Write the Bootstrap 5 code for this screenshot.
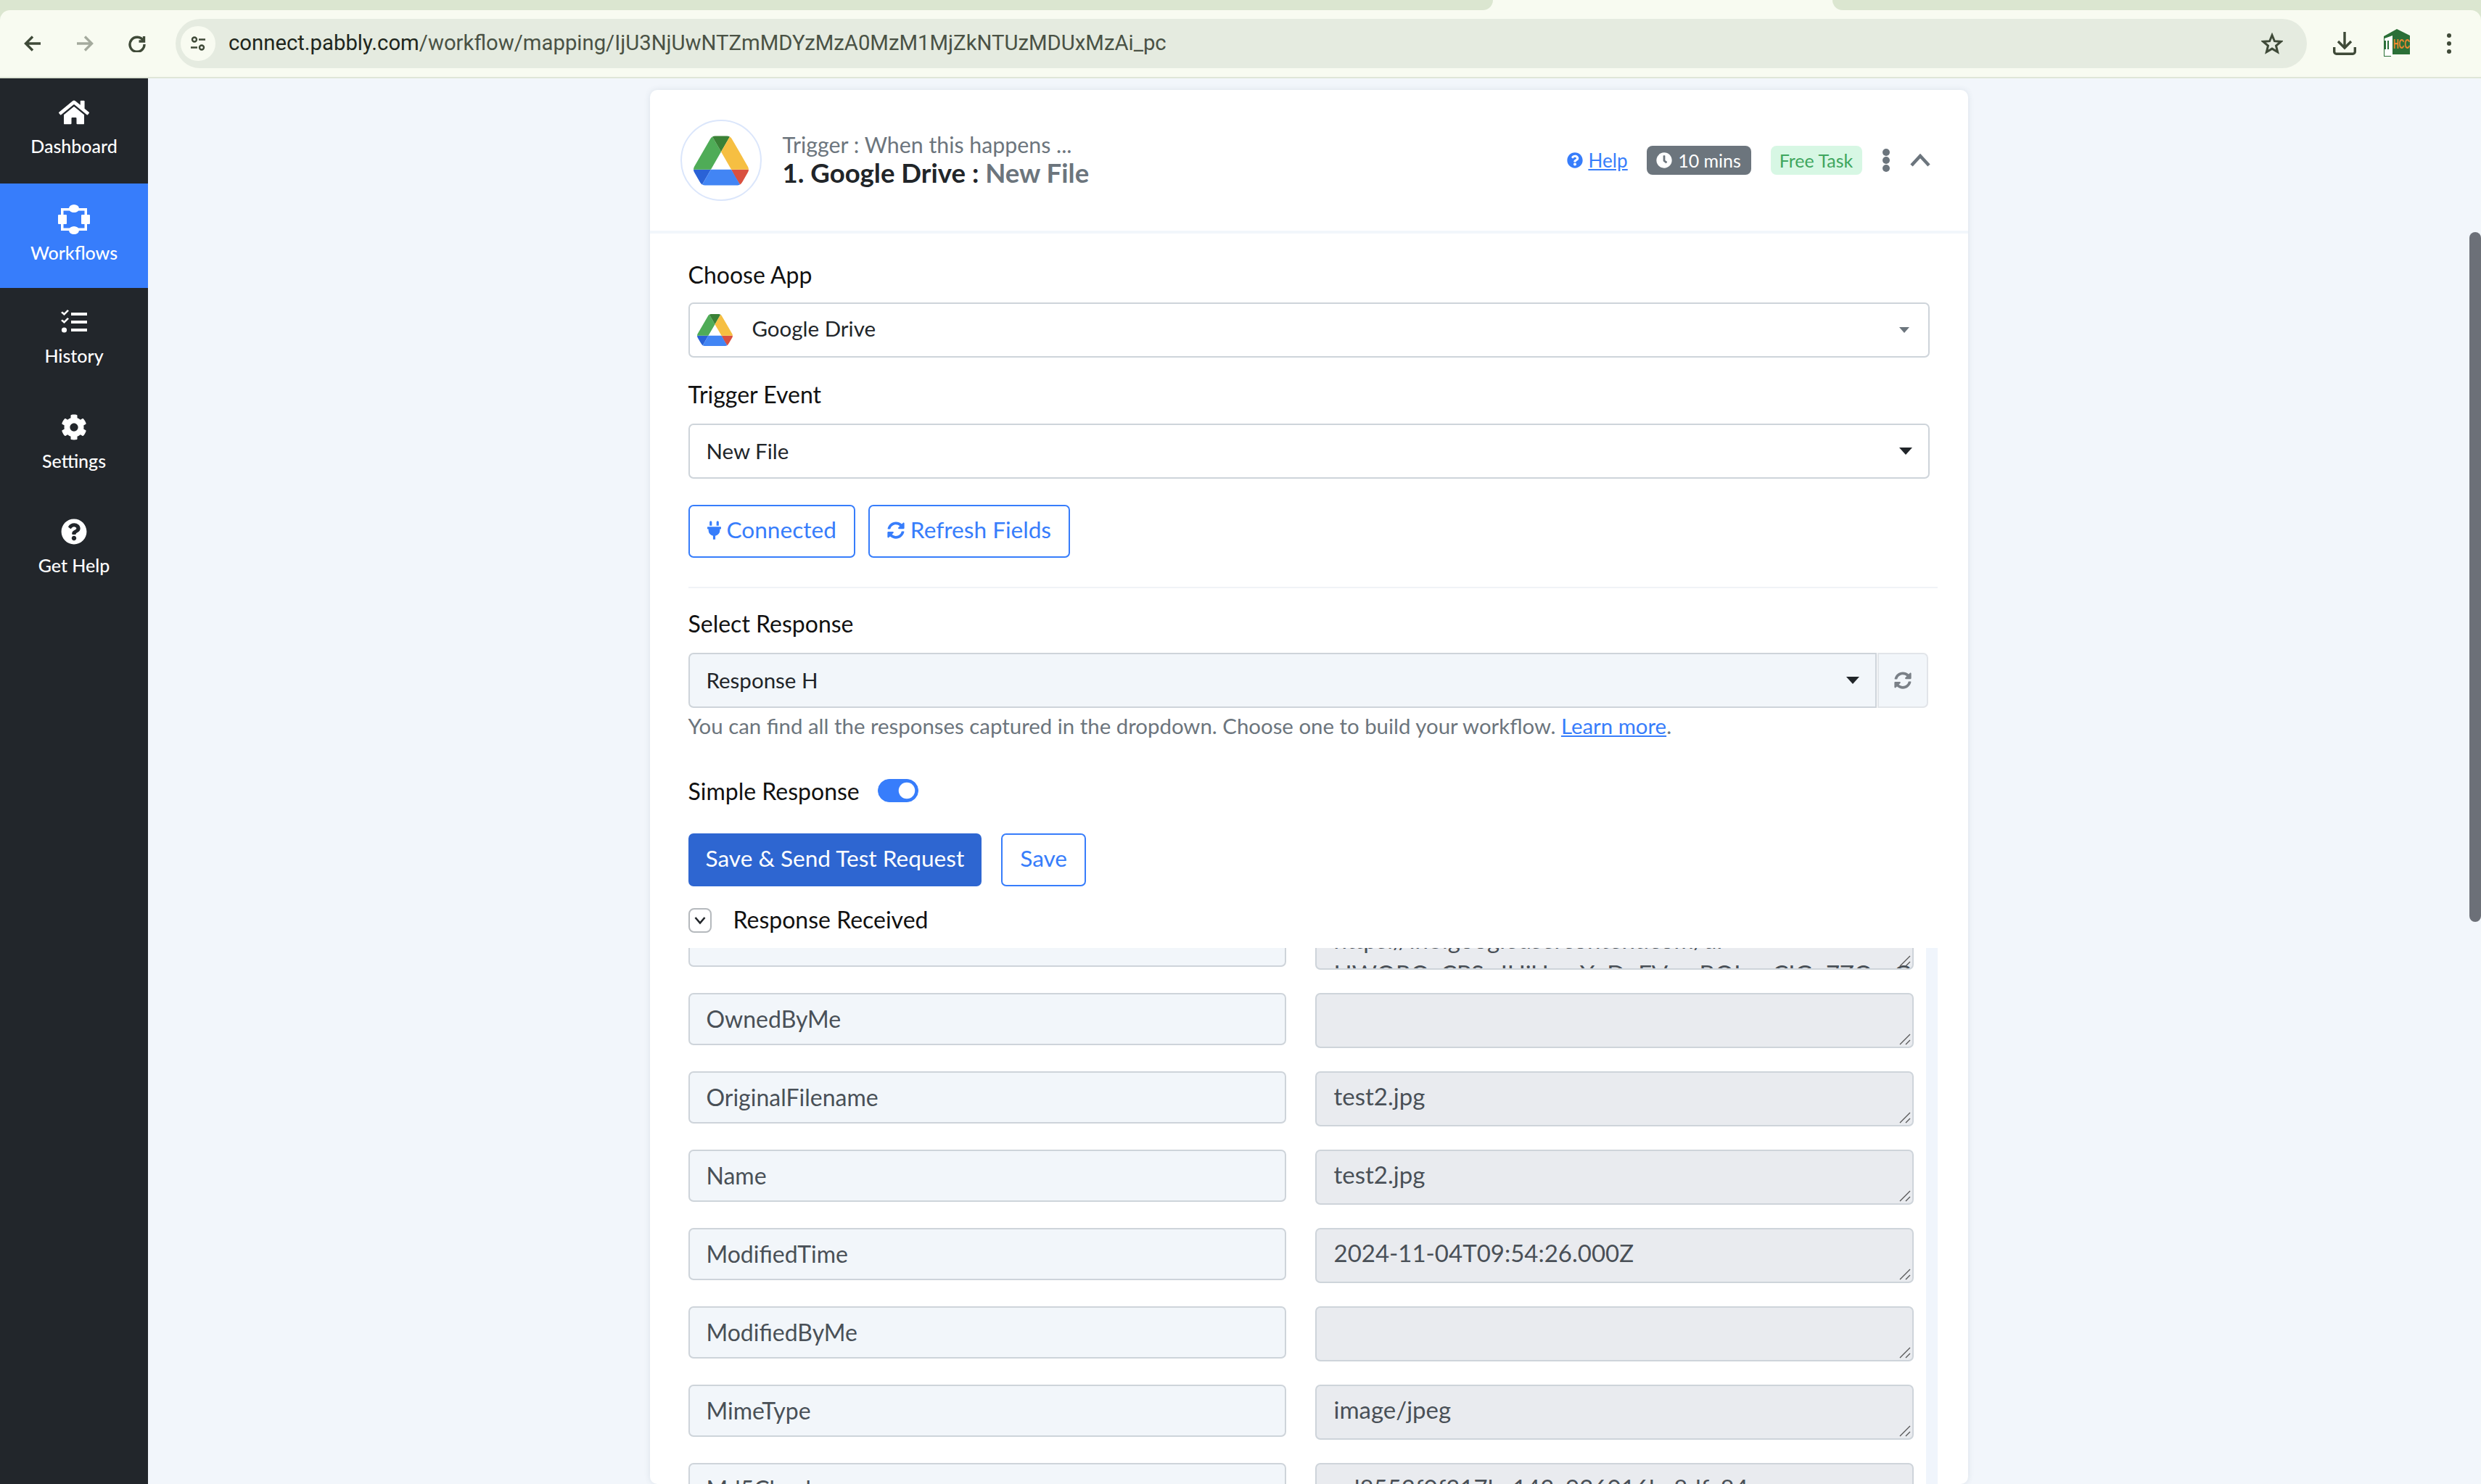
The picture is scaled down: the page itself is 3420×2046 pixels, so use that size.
<!DOCTYPE html>
<html lang="en">
<head>
  <meta charset="UTF-8">
  <meta name="viewport" content="width=device-width, initial-scale=1.0">
  <title>Pabbly Connect - Workflow mapping</title>
  <link rel="stylesheet" href="https://cdn.jsdelivr.net/npm/bootstrap@5.3.0/dist/css/bootstrap.min.css">
  <style>
    html, body { height: 100%; overflow: hidden; }
    body { background: #f2f6fb; font-family: Lato, "Liberation Sans", sans-serif; color: #212529; }

    /* browser chrome */
    .chrome-frame { background: #dbe6d0; flex: none; }
    .tab-strip { height: 14px; background: #f8fbf1; }
    .tab-left { width: 2058px; background: #dbe6d0; border-bottom-right-radius: 22px; }
    .tab-right { flex: 1; margin-left: 468px; background: #dbe6d0; border-bottom-left-radius: 22px; }
    .tool-bar { height: 94px; background: #f8fbf1; border-bottom: 2px solid #dfe6d8; border-radius: 14px 14px 0 0; padding: 0 0 0 33px; }
    .tool-btn { fill: none; stroke: #3f4a38; stroke-width: 3.4; }
    .tool-gap { margin-left: 48px; }
    .tool-dim { opacity: .45; }
    .tool-dl { margin-left: 36px; }
    .tool-avatar { margin-left: 36px; }
    .tool-dots { margin-left: 46px; }
    .url-pill { width: 2938px; height: 68px; margin-left: 41px; border-radius: 34px; background: #e5ebe0; padding: 0 33px 0 7px; }
    .site-dot { width: 48px; height: 48px; border-radius: 50%; background: #f8fbf1; }
    .url-text { margin-left: 18px; font-family: Roboto, sans-serif; font-size: 29.3px; color: #4a5245; }
    .url-text b { font-weight: 400; color: #20261c; }

    /* sidebar */
    .side-nav { width: 204px; background: #22262b; flex: none; }
    .side-link { height: 144.5px; padding-top: 28px; color: #fff; font-size: 25px; font-weight: 500; text-decoration: none; }
    .side-link:hover { color: #fff; }
    .side-link.is-on { background: #377dfb; padding-top: 29px; }
    .side-ico { height: 38px; margin-bottom: 9px; fill: #fff; }
    .is-on .side-ico { height: 41px; margin-bottom: 7px; }

    /* card */
    .work-area { min-width: 0; }
    .flow-card { width: 1817px; margin-top: 16px; border: 0; border-radius: 10px; box-shadow: 0 0 8px rgba(60, 80, 110, .12); }
    .flow-head { height: 198px; border-bottom: 4px solid #f2f6fb; padding: 0 52px 0 42px; }
    .app-ring { width: 112px; height: 112px; border: 2px solid #dbe6fb; border-radius: 50%; margin-right: 29px; }
    .head-text { margin-top: -3px; }
    .head-sub { font-size: 30.3px; line-height: 38px; color: #6c757d; }
    .head-title { font-size: 36.6px; line-height: 44px; margin-top: -2px; font-weight: 700; color: #212529; }
    .head-title span { color: #6c757d; }
    .help-link { font-size: 26px; color: #377dfb; margin-right: 26px; }
    .time-pill, .free-pill { height: 40px; font-size: 25px; font-weight: 400; border-radius: 8px; padding: 0 10px; }
    .time-pill { width: 144px; background: #6c757d; color: #fff; margin-right: 27px; }
    .free-pill { width: 126px; background: #d7f7e4; color: #3fa65e; margin-right: 27px; }
    .chev-up { margin-left: 27px; }
    .flow-body { padding: 0 53px; }
    .fld-label { display: block; font-size: 32px; line-height: 37px; padding-bottom: 3px; color: #111; margin: 0; }
    .top-38 { margin-top: 38px; }
    .top-32 { margin-top: 32px; }
    .pick-box, .pick-native { height: 76px; border: 2px solid #ced4da; border-radius: 7px; font-size: 29.5px; color: #212529; background-color: #fff; }
    .pick-box { margin-top: 17px; padding: 0 26px 0 10px; }
    .pick-box span { margin-left: 27px; padding-bottom: 3px; }
    .caret-mini { width: 0; height: 0; border: 7px solid transparent; border-top: 8px solid #6c757d; border-bottom: 0; margin-left: auto; }
    .pick-native { padding: 0 23px; background-image: url("data:image/svg+xml,%3csvg xmlns='http://www.w3.org/2000/svg' viewBox='0 0 18 10'%3e%3cpath fill='%23212529' d='M0 0h18L9 10z'/%3e%3c/svg%3e"); background-size: 18px 10px; background-position: right 22px center; }
    .mt-event { margin-top: 19px; }
    .line-btns { margin-top: 36px; gap: 18px; }
    .btn-line, .btn-solid { height: 73px; font-size: 31.6px; border-radius: 7px; padding: 0 24px 3px; display: inline-flex; align-items: center; }
    .btn-line { border: 2px solid #377dfb; color: #377dfb; background: #fff; }
    .btn-line:hover { color: #377dfb; background: #fff; border-color: #377dfb; }
    .btn-solid { border: 0; background: #2e66d1; color: #fff; }
    .btn-solid:hover { background: #2e66d1; color: #fff; }
    .btn-line svg { fill: #377dfb; margin-right: 8px; }
    .thin-rule { height: 2px; margin: 40px -11px 0 0; background: #f0f3f7; }
    .top-30 { margin-top: 30px; }
    .resp-group { margin-top: 19px; width: 1709px; }
    .resp-group .pick-native { flex: none; width: 1638px; background-color: #f2f6fa; border-radius: 7px 0 0 7px; }
    .resync-btn { width: 70px; height: 76px; background: #f2f6fa; border: 2px solid #e2e5e9; border-radius: 0 7px 7px 0 !important; margin-left: 1px !important; }
    .resync-btn svg { fill: #7a8087; }
    .hint-line { font-size: 29.4px; line-height: 40px; color: #6c757d; margin: 5px 0 0; }
    .hint-line a { color: #377dfb; }
    .simple-row { margin-top: 51px; height: 40px; }
    .form-switch .switch-big { width: 56px; height: 32px; margin: 0 0 4px 25px; background-color: #377dfb; border-color: #377dfb; }
    .action-row { margin-top: 37px; gap: 27px; }
    .recv-row { margin-top: 27px; height: 40px; }
    .recv-tick { width: 32px; height: 34px; border: 2px solid #b5b9bd; border-radius: 8px; margin-right: 30px; }

    /* response field rows */
    .resp-frame { margin: 18px -11px 0 0; height: 739px; overflow: hidden; }
    .resp-rows { margin-top: -46px; margin-right: 17px; }
    .resp-row { gap: 40px; margin-bottom: 32px; }
    .resp-row > * { flex: 1 1 0; min-width: 0; }
    .fld-key, .fld-val { line-height: 44px; color: #495057; border: 2px solid #ced4da; border-radius: 7px; padding: 10px 24px 12px; box-shadow: none; }
    .fld-key { height: 72px; font-size: 32px; padding-left: 23px; background: #f2f6fa; }
    .fld-val { height: 76px; min-height: 76px; font-size: 33px; overflow: hidden; white-space: pre; resize: none; background: #e9ebef url("data:image/svg+xml,%3csvg xmlns='http://www.w3.org/2000/svg' width='16' height='16'%3e%3cpath d='M1 15 15 1M9 15l6-6' stroke='%23555' stroke-width='1.300' fill='none'/%3e%3c/svg%3e") no-repeat right 2px bottom 2px; }
    .fld-key:focus { background: #f2f6fa; }
    .fld-val:focus { background-color: #e9ebef; }
    .fld-clip { padding-top: 9px; line-height: 47px; }
    .inner-track { width: 16px; flex: none; background: #f0f5fc; }

    /* page scrollbar */
    .page-track { width: 16px; flex: none; }
    .page-thumb { height: 951px; margin-top: 212px; border-radius: 8px; background: #6c7078; }
  </style>
</head>
<body class="d-flex flex-column">

<svg width="0" height="0" class="d-none">
  <symbol id="drive-logo" viewBox="0 0 87.3 78">
    <path d="m6.6 66.85 3.85 6.65c.8 1.4 1.95 2.5 3.3 3.3l13.75-23.8h-27.5c0 1.55.4 3.1 1.2 4.5z" fill="#2a62d6"/>
    <path d="m43.65 25-13.75-23.8c-1.35.8-2.5 1.9-3.3 3.3l-25.4 44a9.06 9.06 0 0 0 -1.2 4.5h27.5z" fill="#4fac57"/>
    <path d="m73.55 76.8c1.35-.8 2.5-1.9 3.3-3.3l1.6-2.75 7.65-13.25c.8-1.4 1.2-2.95 1.2-4.5h-27.502l5.852 11.5z" fill="#d95040"/>
    <path d="m43.65 25 13.75-23.8c-1.35-.8-2.9-1.2-4.5-1.2h-18.5c-1.6 0-3.15.45-4.5 1.2z" fill="#3a8136"/>
    <path d="m59.8 53h-32.3l-13.75 23.8c1.35.8 2.9 1.2 4.5 1.2h50.8c1.6 0 3.15-.45 4.5-1.2z" fill="#4285f4"/>
    <path d="m73.4 26.5-12.7-22c-.8-1.4-1.95-2.5-3.3-3.3l-13.75 23.8 16.15 28h27.45c0-1.55-.4-3.1-1.2-4.5z" fill="#f6bf42"/>
  </symbol>
  <symbol id="sync-ico" viewBox="0 0 512 512">
    <path d="M370.72 133.28C339.458 104.008 298.888 87.962 255.848 88c-77.458.068-144.328 53.178-162.791 126.85-1.344 5.363-6.122 9.15-11.651 9.15H24.103c-7.498 0-13.194-6.807-11.807-14.176C33.933 94.924 134.813 8 256 8c66.448 0 126.791 26.136 171.315 68.685L463.03 40.97C478.149 25.851 504 36.559 504 57.941V192c0 13.255-10.745 24-24 24H345.941c-21.382 0-32.09-25.851-16.971-40.971l41.75-41.749zM32 296h134.059c21.382 0 32.09 25.851 16.971 40.971l-41.75 41.75c31.262 29.273 71.835 45.319 114.876 45.28 77.418-.07 144.315-53.144 162.787-126.849 1.344-5.363 6.122-9.15 11.651-9.15h57.304c7.498 0 13.194 6.807 11.807 14.176C478.067 417.076 377.187 504 256 504c-66.448 0-126.791-26.136-171.315-68.685L48.97 471.03C33.851 486.149 8 475.441 8 454.059V320c0-13.255 10.745-24 24-24z"/>
  </symbol>
  <symbol id="help-ico" viewBox="0 0 512 512">
    <path d="M504 256c0 136.997-111.043 248-248 248S8 392.997 8 256C8 119.083 119.043 8 256 8s248 111.083 248 248zM262.655 90c-54.497 0-89.255 22.957-116.549 63.758-3.536 5.286-2.353 12.415 2.715 16.258l34.699 26.31c5.205 3.947 12.621 3.008 16.665-2.122 17.864-22.658 30.113-35.797 57.303-35.797 20.429 0 45.698 13.148 45.698 32.958 0 14.976-12.363 22.667-32.534 33.976C247.128 238.528 216 254.941 216 296v4c0 6.627 5.373 12 12 12h56c6.627 0 12-5.373 12-12v-1.333c0-28.462 83.186-29.647 83.186-106.667 0-58.002-60.165-102-116.531-102zM256 338c-25.365 0-46 20.635-46 46 0 25.364 20.635 46 46 46s46-20.636 46-46c0-25.365-20.635-46-46-46z"/>
  </symbol>
</svg>

<!-- Browser bar -->
<header class="chrome-frame">
  <div class="tab-strip d-flex">
    <div class="tab-left"></div>
    <div class="tab-right"></div>
  </div>
  <div class="tool-bar d-flex align-items-center">
    <svg class="tool-btn" width="24" height="24" viewBox="0 0 24 24"><path d="M23 12H3M12 2.500 2.500 12l9.500 9.500"/></svg>
    <svg class="tool-btn tool-gap tool-dim" width="24" height="24" viewBox="0 0 24 24"><path d="M1 12h20M12 2.500l9.500 9.500-9.500 9.500"/></svg>
    <svg class="tool-btn tool-gap" width="24" height="24" viewBox="0 0 24 24"><path d="M20.500 8A10 10 0 1 0 22 13"/><path d="M21.500 2v7h-7"/></svg>
    <div class="url-pill d-flex align-items-center">
      <div class="site-dot d-flex align-items-center justify-content-center">
        <svg width="24" height="24" viewBox="0 0 24 24" fill="none" stroke="#3f4a38" stroke-width="2.400"><circle cx="7" cy="6.500" r="3"/><path d="M13 6.500h9M2 17.500h9"/><circle cx="17" cy="17.500" r="3"/></svg>
      </div>
      <div class="url-text"><b>connect.pabbly.com</b>/workflow/mapping/IjU3NjUwNTZmMDYzMzA0MzM1MjZkNTUzMDUxMzAi_pc</div>
      <svg class="ms-auto" width="30" height="30" viewBox="0 0 30 30" fill="none" stroke="#3f4a38" stroke-width="3"><path d="M15 3.500l3.400 8.200 8.800.7-6.700 5.700 2.100 8.600L15 22.100l-7.600 4.600 2.100-8.600-6.700-5.700 8.800-.7z"/></svg>
    </div>
    <svg class="tool-btn tool-dl" width="32" height="32" viewBox="0 0 32 32"><path d="M16 0v21M7 13l9 9 9-9M1.700 21v6.300a3 3 0 0 0 3 3h22.600a3 3 0 0 0 3-3V21"/></svg>
    <svg class="tool-avatar" width="40" height="40" viewBox="0 0 40 40"><path d="M2 10 20 0l18 9v26H12v3H2z" fill="#2b6f37"/><path d="M3 13 14 9v28H3z" fill="#fff"/><path d="M3 16h2v12H3zM7 16h2v12H7z" fill="#2b6f37"/><text transform="translate(15 27) scale(1 1.700)" font-family="Liberation Sans, sans-serif" font-weight="700" font-size="10.500" fill="#ee8a2e">HCC</text></svg>
    <svg class="tool-dots" width="12" height="30" viewBox="0 0 12 30" fill="#3f4a38"><circle cx="6" cy="4" r="3"/><circle cx="6" cy="15" r="3"/><circle cx="6" cy="26" r="3"/></svg>
  </div>
</header>

<div class="d-flex flex-grow-1 overflow-hidden">

  <!-- Sidebar -->
  <nav class="side-nav d-flex flex-column">
    <a href="#" class="side-link d-flex flex-column align-items-center">
      <svg class="side-ico" width="42" viewBox="0 0 576 512"><path d="M280.37 148.26L96 300.11V464a16 16 0 0 0 16 16l112.06-.29a16 16 0 0 0 15.92-16V368a16 16 0 0 1 16-16h64a16 16 0 0 1 16 16v95.64a16 16 0 0 0 16 16.05L464 480a16 16 0 0 0 16-16V300L295.67 148.26a12.19 12.19 0 0 0-15.3 0zM571.6 251.47L488 182.56V44.05a12 12 0 0 0-12-12h-56a12 12 0 0 0-12 12v72.61L318.47 43a48 48 0 0 0-61 0L4.34 251.47a12 12 0 0 0-1.6 16.9l25.5 31A12 12 0 0 0 45.15 301l235.22-193.74a12.19 12.19 0 0 1 15.3 0L530.9 301a12 12 0 0 0 16.9-1.6l25.5-31a12 12 0 0 0-1.7-16.93z"/></svg>
      Dashboard
    </a>
    <a href="#" class="side-link is-on d-flex flex-column align-items-center">
      <svg class="side-ico" width="44" viewBox="0 0 44 41"><path d="M4 5h36v31H4zm3.500 3.500v24h29v-24z" fill-rule="evenodd"/><ellipse cx="22" cy="5.500" rx="7" ry="5.500"/><ellipse cx="22" cy="35.500" rx="7" ry="5.500"/><rect x="0" y="14" width="12" height="13" rx="1"/><rect x="32" y="14" width="12" height="13" rx="1"/></svg>
      Workflows
    </a>
    <a href="#" class="side-link d-flex flex-column align-items-center">
      <svg class="side-ico" width="36" viewBox="0 0 36 38"><path d="M14 6h22v4H14zM14 17h22v4H14zM14 28h22v4H14z"/><circle cx="4.500" cy="30" r="3.600"/><path d="M0 6l2-1.500 2.500 2L9 2l2 1.500L4.500 10zM0 17l2-1.500 2.500 2L9 13l2 1.500L4.500 21z"/></svg>
      History
    </a>
    <a href="#" class="side-link d-flex flex-column align-items-center">
      <svg class="side-ico" width="36" viewBox="0 0 512 512"><path d="M487.4 315.7l-42.6-24.6c4.3-23.2 4.3-47 0-70.2l42.6-24.6c4.9-2.8 7.1-8.6 5.5-14-11.1-35.6-30-67.8-54.7-94.6-3.8-4.1-10-5.1-14.8-2.3L380.8 110c-17.9-15.4-38.5-27.3-60.8-35.1V25.8c0-5.6-3.9-10.5-9.4-11.7-36.7-8.2-74.3-7.8-109.2 0-5.5 1.2-9.4 6.1-9.4 11.7V75c-22.2 7.9-42.8 19.8-60.8 35.1L88.7 85.5c-4.9-2.8-11-1.9-14.8 2.3-24.7 26.7-43.6 58.9-54.7 94.6-1.7 5.4.6 11.2 5.5 14L67.3 221c-4.3 23.2-4.3 47 0 70.2l-42.6 24.6c-4.9 2.8-7.1 8.6-5.5 14 11.1 35.6 30 67.8 54.7 94.6 3.8 4.1 10 5.1 14.8 2.3l42.6-24.6c17.9 15.4 38.5 27.3 60.8 35.1v49.2c0 5.6 3.9 10.5 9.4 11.7 36.7 8.2 74.3 7.8 109.2 0 5.5-1.2 9.4-6.1 9.4-11.7v-49.2c22.2-7.9 42.8-19.8 60.8-35.1l42.6 24.6c4.9 2.8 11 1.9 14.8-2.3 24.7-26.7 43.6-58.9 54.7-94.6 1.5-5.5-.7-11.3-5.6-14.1zM256 336c-44.1 0-80-35.9-80-80s35.9-80 80-80 80 35.9 80 80-35.9 80-80 80z"/></svg>
      Settings
    </a>
    <a href="#" class="side-link d-flex flex-column align-items-center">
      <svg class="side-ico" width="36" height="38"><use href="#help-ico"/></svg>
      Get Help
    </a>
  </nav>

  <!-- Main area -->
  <main class="work-area flex-grow-1 overflow-hidden">
    <div class="card flow-card mx-auto">
      <div class="flow-head d-flex align-items-center">
        <div class="app-ring d-flex align-items-center justify-content-center">
          <svg width="76" height="69"><use href="#drive-logo"/></svg>
        </div>
        <div class="head-text">
          <div class="head-sub">Trigger : When this happens ...</div>
          <div class="head-title">1. Google Drive : <span>New File</span></div>
        </div>
        <div class="ms-auto d-flex align-items-center">
          <a href="#" class="help-link d-inline-flex align-items-center">
            <svg class="me-2" width="22" height="22" fill="#377dfb"><use href="#help-ico"/></svg>
            <u>Help</u>
          </a>
          <span class="badge time-pill d-inline-flex align-items-center justify-content-center">
            <svg class="me-2" width="22" height="22" viewBox="0 0 512 512" fill="#fff"><path d="M256,8C119,8,8,119,8,256S119,504,256,504,504,393,504,256,393,8,256,8Zm92.49,313h0l-20,25a16,16,0,0,1-22.49,2.5h0l-67-49.72a40,40,0,0,1-15-31.23V112a16,16,0,0,1,16-16h32a16,16,0,0,1,16,16V256l58,42.5A16,16,0,0,1,348.49,321Z"/></svg>
            10 mins
          </span>
          <span class="badge free-pill d-inline-flex align-items-center justify-content-center">Free Task</span>
          <svg width="12" height="32" viewBox="0 0 12 32" fill="#6c757d"><ellipse cx="6" cy="5" rx="5" ry="5"/><ellipse cx="6" cy="16" rx="5" ry="5"/><ellipse cx="6" cy="27" rx="5" ry="5"/></svg>
          <svg class="chev-up" width="28" height="18" viewBox="0 0 28 18" fill="none" stroke="#6c757d" stroke-width="4.500"><path d="M2 16 14 3l12 13"/></svg>
        </div>
      </div>

      <div class="flow-body">
        <label class="fld-label top-38">Choose App</label>
        <div class="pick-box d-flex align-items-center">
          <svg width="49" height="44"><use href="#drive-logo"/></svg>
          <span>Google Drive</span>
          <i class="caret-mini"></i>
        </div>

        <label class="fld-label top-32">Trigger Event</label>
        <select class="form-select pick-native mt-event"><option>New File</option></select>

        <div class="line-btns d-flex">
          <button type="button" class="btn btn-line">
            <svg width="19" height="26" viewBox="0 0 384 512"><path d="M320,32a32,32,0,0,0-64,0v96h64Zm48,128H16A16,16,0,0,0,0,176v32a16,16,0,0,0,16,16H32v32A160.07,160.07,0,0,0,160,412.8V512h64V412.8A160.07,160.07,0,0,0,352,256V224h16a16,16,0,0,0,16-16V176A16,16,0,0,0,368,160ZM128,32a32,32,0,0,0-64,0v96h64Z"/></svg>
            Connected
          </button>
          <button type="button" class="btn btn-line">
            <svg width="24" height="24"><use href="#sync-ico"/></svg>
            Refresh Fields
          </button>
        </div>

        <div class="thin-rule"></div>

        <label class="fld-label top-30">Select Response</label>
        <div class="input-group flex-nowrap resp-group">
          <select class="form-select pick-native"><option>Response H</option></select>
          <button type="button" class="btn resync-btn d-flex align-items-center justify-content-center">
            <svg width="24" height="24"><use href="#sync-ico"/></svg>
          </button>
        </div>
        <p class="hint-line">You can find all the responses captured in the dropdown. Choose one to build your workflow. <a href="#">Learn more</a>.</p>

        <div class="simple-row d-flex align-items-center form-switch p-0">
          <span class="fld-label">Simple Response</span>
          <input class="form-check-input switch-big" type="checkbox" role="switch" checked>
        </div>

        <div class="action-row d-flex">
          <button type="button" class="btn btn-solid">Save &amp; Send Test Request</button>
          <button type="button" class="btn btn-line">Save</button>
        </div>

        <div class="recv-row d-flex align-items-center">
          <span class="recv-tick d-flex align-items-center justify-content-center">
            <svg width="16" height="12" viewBox="0 0 16 12" fill="none" stroke="#212529" stroke-width="2.600"><path d="M1.500 2 8 9.500 14.500 2"/></svg>
          </span>
          <span class="fld-label">Response Received</span>
        </div>

        <div class="resp-frame d-flex">
          <div class="resp-rows flex-grow-1">
            <div class="resp-row d-flex align-items-start">
              <input class="form-control fld-key" readonly value="">
              <textarea class="form-control fld-val fld-clip" readonly>https://lh3.googleusercontent.com/dr
HWQRQ_CPSnJHiUmaXgDnFVmnBQIwnCIGq7ZOgrG</textarea>
            </div>
            <div class="resp-row d-flex align-items-start">
              <input class="form-control fld-key" readonly value="OwnedByMe">
              <textarea class="form-control fld-val" readonly></textarea>
            </div>
            <div class="resp-row d-flex align-items-start">
              <input class="form-control fld-key" readonly value="OriginalFilename">
              <textarea class="form-control fld-val" readonly>test2.jpg</textarea>
            </div>
            <div class="resp-row d-flex align-items-start">
              <input class="form-control fld-key" readonly value="Name">
              <textarea class="form-control fld-val" readonly>test2.jpg</textarea>
            </div>
            <div class="resp-row d-flex align-items-start">
              <input class="form-control fld-key" readonly value="ModifiedTime">
              <textarea class="form-control fld-val" readonly>2024-11-04T09:54:26.000Z</textarea>
            </div>
            <div class="resp-row d-flex align-items-start">
              <input class="form-control fld-key" readonly value="ModifiedByMe">
              <textarea class="form-control fld-val" readonly></textarea>
            </div>
            <div class="resp-row d-flex align-items-start">
              <input class="form-control fld-key" readonly value="MimeType">
              <textarea class="form-control fld-val" readonly>image/jpeg</textarea>
            </div>
            <div class="resp-row d-flex align-items-start">
              <input class="form-control fld-key" readonly value="Md5Checksum">
              <textarea class="form-control fld-val" readonly>ed8553f0f317bc143c926016bc8dfc84</textarea>
            </div>
          </div>
          <div class="inner-track"></div>
        </div>
      </div>
    </div>
  </main>

  <div class="page-track"><div class="page-thumb"></div></div>
</div>

</body>
</html>
